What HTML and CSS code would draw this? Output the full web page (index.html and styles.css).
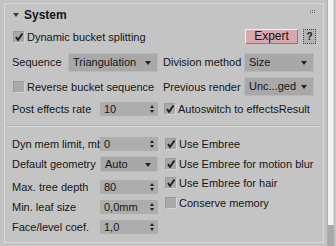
FILE: index.html
```html
<!DOCTYPE html>
<html lang="en">
<head>
    <meta charset="UTF-8">
    <title>System</title>
    <link rel="stylesheet" href="styles.css">
</head>
<body>
<div class="screen">
    <div class="rollout">
        <div class="head">
            <span class="tri"></span>
            <span class="title">System</span>
            <span class="grip"><i></i><i></i><i></i><i></i><i></i><i></i></span>
        </div>

        <div class="row r-dyn">
            <span class="check on"><i class="box"><svg viewBox="0 0 10 10"><path d="M2 5 L4 8 L8.5 1.5" /></svg></i>Dynamic bucket splitting</span>
            <span class="expert">Expert</span>
            <span class="help">?</span>
        </div>

        <div class="grid2 r-seq">
            <div class="cell">
                <span class="lbl l-seq">Sequence</span>
                <span class="drop d-seq">Triangulation</span>
            </div>
            <div class="cell">
                <span class="lbl l-right">Division method</span>
                <span class="drop d-right">Size</span>
            </div>
        </div>

        <div class="grid2 r-rev">
            <div class="cell">
                <span class="check"><i class="box"></i>Reverse bucket sequence</span>
            </div>
            <div class="cell">
                <span class="lbl l-right">Previous render</span>
                <span class="drop d-right">Unc...ged</span>
            </div>
        </div>

        <div class="grid2 r-post">
            <div class="cell">
                <span class="lbl l-wide">Post effects rate</span>
                <span class="spin">10</span>
            </div>
            <div class="cell">
                <span class="check on"><i class="box"><svg viewBox="0 0 10 10"><path d="M2 5 L4 8 L8.5 1.5" /></svg></i>Autoswitch to effectsResult</span>
            </div>
        </div>

        <div class="sep"></div>

        <div class="grid2 lower">
            <div class="col-left">
                <div class="cell lrow">
                    <span class="lbl l-wide">Dyn mem limit, mb</span>
                    <span class="spin">0</span>
                </div>
                <div class="cell lrow gap-after">
                    <span class="lbl l-wide">Default geometry</span>
                    <span class="drop d-small">Auto</span>
                </div>
                <div class="cell lrow">
                    <span class="lbl l-wide">Max. tree depth</span>
                    <span class="spin">80</span>
                </div>
                <div class="cell lrow">
                    <span class="lbl l-wide">Min. leaf size</span>
                    <span class="spin">0,0mm</span>
                </div>
                <div class="cell lrow">
                    <span class="lbl l-wide">Face/level coef.</span>
                    <span class="spin">1,0</span>
                </div>
            </div>
            <div class="col-right">
                <div class="cell rrow">
                    <span class="check on"><i class="box"><svg viewBox="0 0 10 10"><path d="M2 5 L4 8 L8.5 1.5" /></svg></i>Use Embree</span>
                </div>
                <div class="cell rrow">
                    <span class="check on"><i class="box"><svg viewBox="0 0 10 10"><path d="M2 5 L4 8 L8.5 1.5" /></svg></i>Use Embree for motion blur</span>
                </div>
                <div class="cell rrow">
                    <span class="check on"><i class="box"><svg viewBox="0 0 10 10"><path d="M2 5 L4 8 L8.5 1.5" /></svg></i>Use Embree for hair</span>
                </div>
                <div class="cell rrow">
                    <span class="check"><i class="box"></i>Conserve memory</span>
                </div>
            </div>
        </div>
    </div>

    <div class="scroll">
        <div class="thumb"></div>
    </div>
</div>
</body>
</html>
```

FILE: styles.css
```css
body {
    margin: 0;
    background-color: #c3c3c3;
    font-family: "Liberation Sans", Arial, sans-serif;
    font-size: 11px;
    color: #151515;
}

.screen {
    display: flex;
    width: 336px;
    height: 246px;
    overflow: hidden;
}

.rollout {
    width: 320px;
    margin: 3px 0 0 4px;
    padding: 0 0 4px 7px;
    box-sizing: border-box;
    border: 1px solid #d9d9d9;
    height: 240px;
    background-color: #c4c4c4;
}

/* header */
.head {
    display: flex;
    align-items: center;
    height: 22px;
}

.tri {
    width: 0;
    height: 0;
    border-left: 3px solid transparent;
    border-right: 3px solid transparent;
    border-top: 4px solid #3a3a3a;
    margin: 0 5px 0 1px;
}

.title {
    font-weight: bold;
    font-size: 12px;
}

.grip {
    margin-left: auto;
    margin-right: 8px;
    display: grid;
    grid-template-columns: repeat(3, 1px);
    gap: 1px;
    margin-top: -8px;
}

.grip i {
    width: 1px;
    height: 1px;
    background-color: #707070;
}

/* rows */
.row {
    display: flex;
    align-items: center;
}

.r-dyn {
    height: 21px;
}

.grid2 {
    display: grid;
    grid-template-columns: 151px 1fr;
}

.r-seq {
    height: 30px;
    align-items: center;
}

.r-rev {
    height: 19px;
    align-items: center;
}

.r-post {
    height: 26px;
    align-items: center;
}

.cell {
    display: flex;
    align-items: center;
}

.lbl {
    flex-shrink: 0;
    white-space: nowrap;
    overflow: hidden;
}

.l-seq {
    width: 56px;
}

.l-wide {
    width: 88px;
}

.l-right {
    width: 81px;
}

/* checkbox */
.check {
    display: flex;
    align-items: center;
    white-space: nowrap;
    padding-left: 1px;
}

.box {
    width: 10px;
    height: 10px;
    margin-right: 2px;
    background-color: #a9a9a9;
    border-top: 1px solid #9a9a9a;
    border-left: 1px solid #9a9a9a;
    border-right: 1px solid #d4d4d4;
    border-bottom: 1px solid #d4d4d4;
    display: flex;
}

.box svg {
    width: 10px;
    height: 10px;
}

.box path {
    fill: none;
    stroke: #1a1a1a;
    stroke-width: 1.8;
}

/* buttons */
.expert {
    margin-left: auto;
    width: 51px;
    height: 13px;
    line-height: 13px;
    text-align: center;
    background-color: #d7a8ad;
    border: 1px solid;
    border-color: #f2f2f2 #808080 #808080 #f2f2f2;
    font-size: 12px;
}

.help {
    width: 11px;
    height: 13px;
    line-height: 13px;
    margin: 0 7px 0 5px;
    text-align: center;
    font-size: 10px;
    font-weight: bold;
    background-color: #b4b4b4;
    border: 1px dotted #4a4a4a;
}

/* fields */
.drop {
    position: relative;
    height: 17px;
    line-height: 17px;
    padding-left: 4px;
    box-sizing: border-box;
    background-color: #a8a8a8;
    border: 1px solid #b8b8b8;
    font-size: 11px;
}

.drop::after {
    content: "";
    position: absolute;
    right: 6px;
    top: 7px;
    border-left: 3px solid transparent;
    border-right: 3px solid transparent;
    border-top: 4px solid #202020;
}

.d-seq {
    width: 90px;
    height: 19px;
    line-height: 17px;
}

.d-right {
    width: 70px;
    height: 19px;
}

.d-small {
    width: 58px;
    height: 16px;
    line-height: 14px;
}

.d-small::after {
    top: 6px;
}

.spin {
    position: relative;
    width: 58px;
    height: 14px;
    line-height: 14px;
    padding-left: 4px;
    box-sizing: border-box;
    background-color: #adadad;
    font-size: 11px;
}

.spin::before,
.spin::after {
    content: "";
    position: absolute;
    right: 4px;
    border-left: 2px solid transparent;
    border-right: 2px solid transparent;
}

.spin::before {
    top: 3px;
    border-bottom: 3px solid #202020;
}

.spin::after {
    bottom: 3px;
    border-top: 3px solid #202020;
}

/* separator */
.sep {
    margin: 3px 2px 0 -6px;
    border-top: 1px solid #b3b3b3;
    border-bottom: 1px solid #dadada;
}

.lower {
    padding-top: 7px;
}

.lrow {
    height: 20px;
}

.gap-after {
    margin-bottom: 3px;
}

.col-right {
    padding-left: 1px;
}

.rrow {
    height: 19.7px;
}

/* scrollbar */
.scroll {
    width: 6px;
    margin-left: 3px;
    background-color: #a9a9a9;
    border-left: 1px solid #b0b0b0;
}

.thumb {
    height: 225px;
    background-color: #f4f4f4;
    border-right: 1px solid #d0d0d0;
}
```
